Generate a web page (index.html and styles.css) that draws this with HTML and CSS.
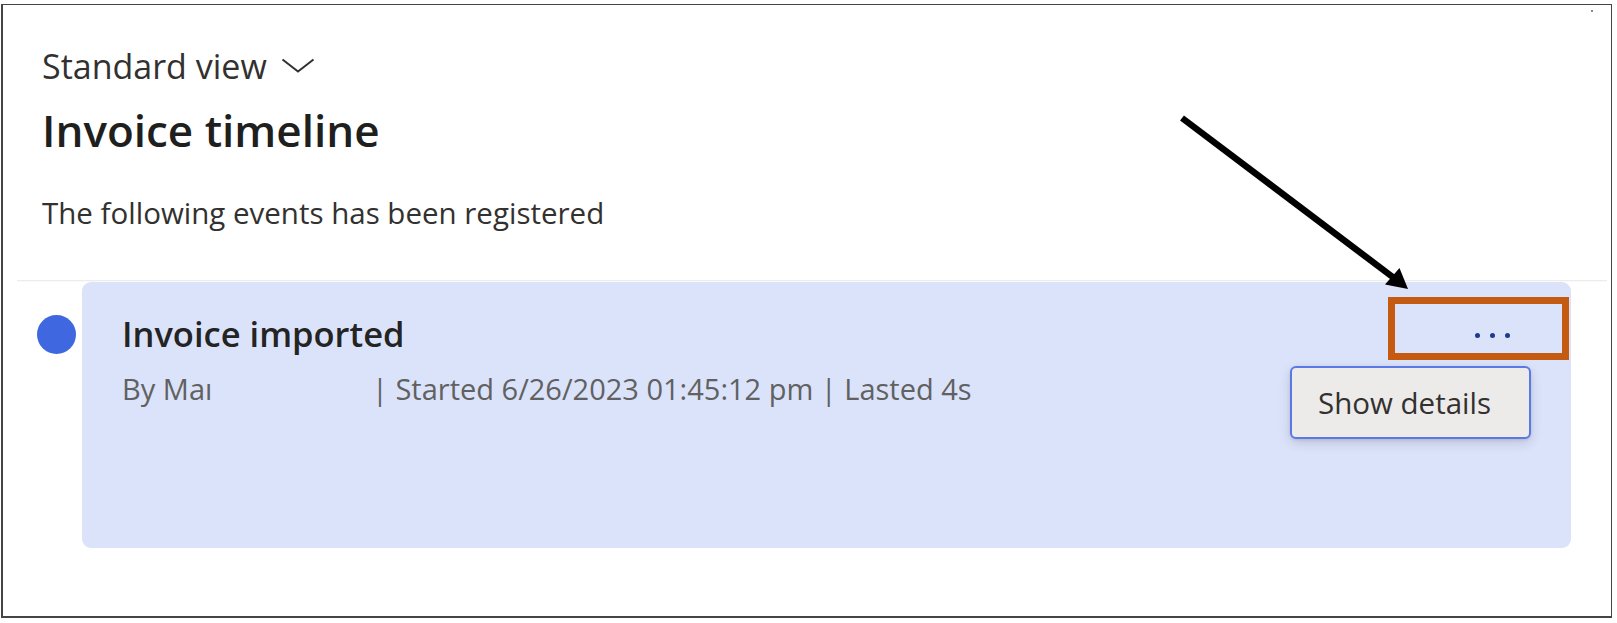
FILE: index.html
```html
<!DOCTYPE html>
<html lang="en">
<head>
<meta charset="utf-8">
<title>Invoice timeline</title>
<link rel="stylesheet" href="styles.css">
</head>
<body>
<div class="frame">
  <header class="head">
    <button class="view-switch" type="button">
      <span>Standard view</span>
      <svg class="chevron" width="34" height="15" viewBox="0 0 34 15" aria-hidden="true"><path d="M1.5 1.5 L17 13.5 L32.5 1.5" fill="none" stroke="#323130" stroke-width="2"/></svg>
    </button>
    <h1 class="title">Invoice timeline</h1>
    <p class="sub">The following events has been registered</p>
  </header>
  <div class="divider"></div>
  <div class="timeline">
    <div class="event">
      <span class="dot"></span>
      <div class="card">
        <div class="card-main">
          <div class="event-title">Invoice imported</div>
          <div class="meta"><span class="by">By Maı</span><span class="rest">| Started 6/26/2023 01:45:12 pm | Lasted 4s</span></div>
        </div>
        <div class="card-actions">
          <button class="more" type="button" aria-label="More actions"><i></i><i></i><i></i></button>
          <div class="menu" role="menu"><span class="menu-item">Show details</span></div>
        </div>
      </div>
    </div>
  </div>
</div>
<span class="speck"></span>
<div class="highlight"></div>
<svg class="arrow" width="1617" height="623" viewBox="0 0 1617 623" aria-hidden="true">
  <line x1="1182" y1="118" x2="1394" y2="278" stroke="#000" stroke-width="6.5"/>
  <polygon points="1408,289 1385,284.5 1399.5,268" fill="#000"/>
</svg>
</body>
</html>
```
FILE: styles.css
```css
html, body {
  margin: 0;
  padding: 0;
  background: #ffffff;
}
body {
  position: relative;
  width: 1617px;
  height: 623px;
  overflow: hidden;
  font-family: "Open Sans", "Noto Sans", "Liberation Sans", sans-serif;
  color: #323130;
}
.frame {
  box-sizing: border-box;
  margin: 4px 0 0 1px;
  width: 1611px;
  height: 614px;
  border: 2px solid #454545;
  border-top-width: 1px;
  border-right-width: 1.5px;
  display: flex;
  flex-direction: column;
}
.head {
  padding: 41px 0 0 39px;
}
.view-switch {
  display: flex;
  align-items: center;
  gap: 14px;
  margin: 0;
  padding: 0;
  border: 0;
  background: none;
  font: inherit;
  font-size: 34px;
  line-height: 40px;
  color: #323130;
}
.chevron {
  display: block;
  margin-top: -2px;
}
.title {
  margin: 16px 0 0 0;
  font-size: 44px;
  font-weight: 600;
  line-height: 56px;
  color: #201f1e;
}
.sub {
  margin: 36px 0 0 0;
  font-size: 29.5px;
  line-height: 38px;
  color: #323130;
}
.divider {
  height: 1px;
  margin: 48px 4px 0 14px;
  background: #ececec;
  box-shadow: 0 1px 1px rgba(0,0,0,0.03);
}
.timeline {
  padding: 1px 0 0 0;
}
.event {
  display: flex;
  align-items: flex-start;
  gap: 6px;
  padding-left: 34px;
}
.dot {
  flex: none;
  width: 39px;
  height: 39px;
  margin-top: 33px;
  border-radius: 50%;
  background: #3e67e0;
}
.card {
  box-sizing: border-box;
  width: 1489px;
  height: 266px;
  border-radius: 9px;
  background: #dbe3fb;
  display: flex;
  justify-content: space-between;
}
.card-main {
  padding: 30px 0 0 40px;
}
.event-title {
  font-size: 34.5px;
  font-weight: 600;
  line-height: 44px;
  color: #242424;
}
.meta {
  margin-top: 14px;
  font-size: 29px;
  line-height: 38px;
  color: #616161;
  display: flex;
}
.by {
  width: 250px;
}
.card-actions {
  position: relative;
  padding: 33px 40px 0 0;
}
.more {
  display: flex;
  align-items: center;
  justify-content: center;
  gap: 10px;
  width: 78px;
  height: 40px;
  margin: 0;
  padding: 0;
  border: 0;
  background: none;
}
.more i {
  display: block;
  width: 5px;
  height: 5px;
  border-radius: 50%;
  background: #1d3a8f;
}
.menu {
  position: absolute;
  top: 84px;
  right: 40px;
  box-sizing: border-box;
  width: 241px;
  height: 73px;
  display: flex;
  align-items: center;
  padding-left: 26px;
  background: #edebe9;
  border: 2px solid #5a79e6;
  border-radius: 6px;
  box-shadow: 0 4px 12px rgba(0, 0, 0, 0.14), 0 1px 3px rgba(0, 0, 0, 0.1);
}
.menu-item {
  font-size: 29.5px;
  line-height: 38px;
  color: #323130;
}
.highlight {
  position: absolute;
  left: 1388px;
  top: 297px;
  box-sizing: border-box;
  width: 181px;
  height: 63px;
  border: 7px solid #c55a11;
}
.arrow {
  position: absolute;
  left: 0;
  top: 0;
  pointer-events: none;
}
.speck {
  position: absolute;
  left: 1591px;
  top: 10px;
  width: 2px;
  height: 2px;
  background: #8a8a8a;
}
```
